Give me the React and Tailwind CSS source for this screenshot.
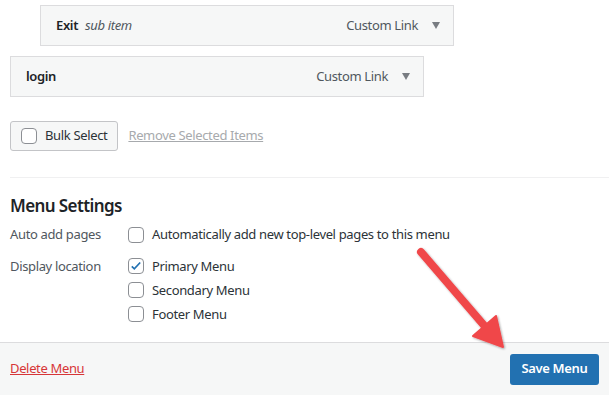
import React from 'react';

const MenuItem = ({ title, sub, indent }) => (
  <div className={`flex items-center h-[41px] w-[414px] border border-[#dcdcde] bg-[#f6f7f7] ${indent ? 'ml-[30px]' : ''}`}>
    <span className="pl-[15px] text-[13px] font-semibold text-[#1d2327]">{title}</span>
    {sub && <span className="ml-[7px] text-[13px] italic text-[#50575e]">{sub}</span>}
    <span className="ml-auto text-[13px] text-[#50575e]">Custom Link</span>
    <span className="ml-[14px] mr-[13px] w-0 h-0 border-l-[4.5px] border-r-[4.5px] border-t-[7px] border-l-transparent border-r-transparent border-t-[#787c82]" />
  </div>
);

const Check = ({ checked }) => (
  <span className="w-[16px] h-[16px] rounded-[4px] border border-[#8c8f94] bg-white flex items-center justify-center shrink-0">
    {checked && (
      <svg width="14" height="14" viewBox="0 0 20 20">
        <path d="M4 10.5l3.6 3.6L16 5" fill="none" stroke="#2271b1" strokeWidth="2.4" />
      </svg>
    )}
  </span>
);

const Option = ({ label, checked }) => (
  <label className="flex items-center gap-[8px] text-[13px] text-[#2c3338]">
    <Check checked={checked} />
    <span>{label}</span>
  </label>
);

export default function App() {
  return (
    <div className="relative w-[609px] h-[395px] bg-white flex flex-col overflow-hidden tracking-[-0.35px]" style={{ fontFamily: '"Noto Sans", "Open Sans", sans-serif' }}>
      <div className="px-[10px] pt-[5px] flex-1">
        <MenuItem title="Exit" sub="sub item" indent />
        <div className="mt-[10px]">
          <MenuItem title="login" />
        </div>

        <div className="mt-[24px] flex items-center gap-[10px]">
          <button className="flex items-center gap-[8px] h-[30px] px-[10px] border border-[#c3c4c7] rounded-[3px] bg-[#f6f7f7] text-[13px] text-[#2c3338] tracking-[-0.35px]">
            <Check />
            <span>Bulk Select</span>
          </button>
          <span className="text-[13px] text-[#a7aaad] underline">Remove Selected Items</span>
        </div>

        <div className="mt-[26px] border-t border-[#f0f0f1] -mr-[10px]" />

        <h3 className="mt-[16px] text-[17px] font-semibold text-[#1d2327] leading-[24px] tracking-[-0.6px]">Menu Settings</h3>

        <div className="mt-[7px] flex">
          <div className="w-[118px] text-[13px] text-[#50575e]">Auto add pages</div>
          <Option label="Automatically add new top-level pages to this menu" />
        </div>

        <div className="mt-[12px] flex">
          <div className="w-[118px] text-[13px] text-[#50575e] leading-[18px]">Display location</div>
          <div className="flex flex-col gap-[4.5px]">
            <Option label="Primary Menu" checked />
            <Option label="Secondary Menu" />
            <Option label="Footer Menu" />
          </div>
        </div>
      </div>

      <div className="h-[53px] border-t border-[#dcdcde] bg-[#f6f7f7] flex items-center justify-between px-[10px]">
        <span className="text-[13px] text-[#d63638] underline">Delete Menu</span>
        <button className="h-[31px] w-[89px] rounded-[3px] bg-[#2271b1] text-white text-[13px] font-semibold tracking-[-0.35px]">Save Menu</button>
      </div>

      <svg className="absolute left-0 top-0 pointer-events-none" width="609" height="395">
        <defs>
          <filter id="sh" x="-20%" y="-20%" width="140%" height="140%">
            <feDropShadow dx="1" dy="1" stdDeviation="1.2" floodColor="#000" floodOpacity="0.35" />
          </filter>
        </defs>
        <g filter="url(#sh)" fill="#f0474a" stroke="#f0474a">
          <line x1="421" y1="252" x2="488" y2="330" strokeWidth="8" strokeLinecap="round" />
          <polygon points="473,336 496,316 503,347" strokeWidth="2" strokeLinejoin="round" />
        </g>
      </svg>
    </div>
  );
}
